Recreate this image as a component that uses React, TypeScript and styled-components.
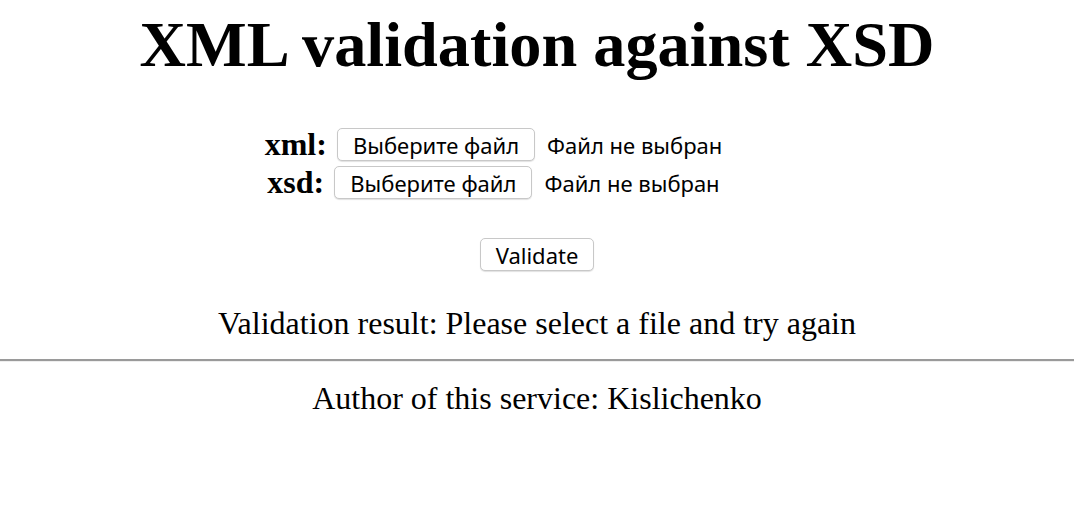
import React from "react";
import styled, { createGlobalStyle } from "styled-components";

const Global = createGlobalStyle`
  html, body { margin: 0; padding: 0; background: #fff; }
  body { font-family: "Liberation Serif", "Times New Roman", serif; color: #000; }
`;

const Page = styled.div`
  display: flex;
  flex-direction: column;
  align-items: center;
  padding-top: 8px;
`;

const Title = styled.h1`
  margin: 0;
  font-size: 64.3px;
  font-weight: bold;
  line-height: 74px;
  text-align: center;
`;

const Form = styled.form`
  display: flex;
  flex-direction: column;
  align-items: center;
  margin-top: 46px;
`;

const Rows = styled.div`
  display: flex;
  flex-direction: column;
  align-items: center;
  gap: 5px;
  margin-right: 87px;
`;

const Row = styled.div`
  display: flex;
  align-items: center;
`;

const Label = styled.label`
  font-size: 32px;
  font-weight: bold;
  line-height: 33px;
  margin-right: 10px;
`;

const Button = styled.button`
  font-family: "Noto Sans", "Liberation Sans", sans-serif;
  font-size: 22px;
  color: #000;
  background: #fff;
  border: 1px solid #c8c8c8;
  border-radius: 5px;
  box-shadow: 0 1px 1px rgba(0, 0, 0, 0.12);
  height: 33px;
  padding: 0 15px;
  line-height: 1;
`;

const Status = styled.span`
  font-family: "Noto Sans", "Liberation Sans", sans-serif;
  font-size: 22px;
  margin-left: 12px;
`;

const ValidateWrap = styled.div`
  margin-top: 39px;
`;

const Result = styled.p`
  margin: 34px 0 0;
  font-size: 32px;
  line-height: 37px;
  text-align: center;
`;

const Rule = styled.hr`
  align-self: stretch;
  margin: 17px 0 0;
  border: none;
  border-top: 2px solid #9a9a9a;
  border-bottom: 1px solid #eee;
`;

const Author = styled.p`
  margin: 18px 0 0;
  font-size: 32px;
  line-height: 37px;
  text-align: center;
`;

function FileRow({ label }: { label: string }) {
  return (
    <Row>
      <Label>{label}:</Label>
      <Button type="button">Выберите файл</Button>
      <Status>Файл не выбран</Status>
    </Row>
  );
}

export default function App() {
  return (
    <>
      <Global />
      <Page>
        <Title>XML validation against XSD</Title>
        <Form onSubmit={(e) => e.preventDefault()}>
          <Rows>
            <FileRow label="xml" />
            <FileRow label="xsd" />
          </Rows>
          <ValidateWrap>
            <Button type="submit">Validate</Button>
          </ValidateWrap>
        </Form>
        <Result>Validation result: Please select a file and try again</Result>
        <Rule />
        <Author>Author of this service: Kislichenko</Author>
      </Page>
    </>
  );
}
